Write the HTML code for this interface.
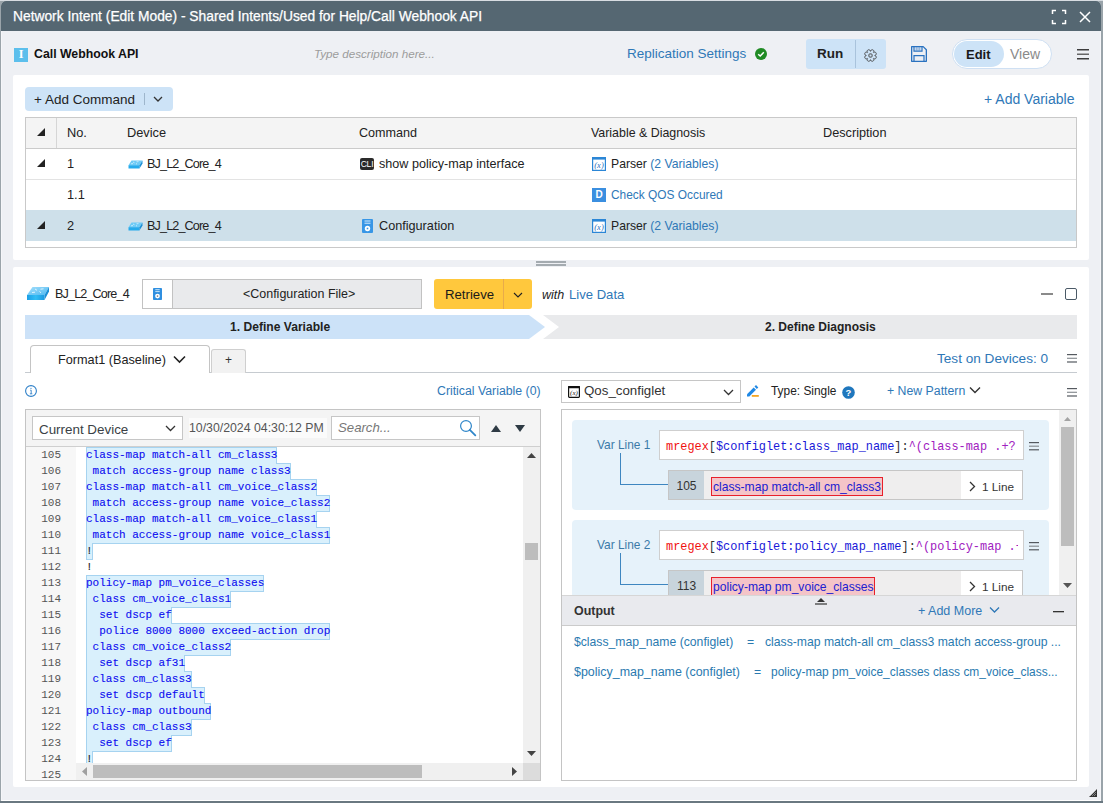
<!DOCTYPE html>
<html><head><meta charset="utf-8">
<style>
*{box-sizing:border-box;margin:0;padding:0}
html,body{width:1103px;height:803px;overflow:hidden}
body{position:relative;background:#9aa4aa;font-family:"Liberation Sans",sans-serif;font-size:12.5px;color:#222}
.a{position:absolute}
.t{position:absolute;white-space:pre;line-height:16px}
.win{position:absolute;left:1px;top:1px;width:1100px;height:800px;background:#eef0f4;border-radius:5px 5px 0 0;overflow:hidden;border-left:1px solid #f5f6f9;border-right:1px solid #f5f6f9;border-bottom:1px solid #fff}
.title{position:absolute;left:0;top:0;width:1100px;height:30px;background:#556772}
.card{position:absolute;background:#fff;border-radius:2px}
.blue{color:#2f78b7}
.ham{position:absolute;width:12px;height:10px;border-top:2px solid #555;border-bottom:2px solid #555}
.ham:after{content:"";position:absolute;left:0;top:2px;width:12px;height:2px;background:#555}
.mono{font-family:"Liberation Mono",monospace}
</style></head><body>
<div class="a" style="left:0;top:0;width:1103px;height:1px;background:#d8dde2"></div><div class="a" style="left:0;top:801px;width:1103px;height:2px;background:#6a7881"></div>
<div class="win"></div>
<div class="title" style="left:1px;top:1px;border-radius:5px 5px 0 0"></div>

<!-- title text -->
<div class="t" style="left:13px;top:9px;color:#fff;font-size:13.8px;-webkit-text-stroke:0.25px #fff">Network Intent (Edit Mode) - Shared Intents/Used for Help/Call Webhook API</div>
<!-- maximize -->
<svg class="a" style="left:1051px;top:9px" width="16" height="16" viewBox="0 0 16 16"><path d="M1.5 5V1.5H5M11 1.5H14.5V5M14.5 11V14.5H11M5 14.5H1.5V11" fill="none" stroke="#fff" stroke-width="1.5"/></svg>
<!-- close -->
<svg class="a" style="left:1078px;top:10px" width="14" height="14" viewBox="0 0 14 14"><path d="M2 2L12 12M12 2L2 12" fill="none" stroke="#fff" stroke-width="1.5"/></svg>

<!-- row 2 -->
<div class="a" style="left:14px;top:48px;width:14px;height:14px;background:#5cbfec"></div>
<div class="t" style="left:14px;top:46px;width:14px;text-align:center;color:#fff;font-family:'Liberation Serif';font-weight:bold;font-size:12px">I</div>
<div class="t" style="left:34px;top:46px;font-weight:bold;font-size:12.3px;color:#111">Call Webhook API</div>
<div class="t" style="left:314px;top:46px;font-style:italic;color:#9c9c9c;font-size:11.65px">Type description here...</div>
<div class="t blue" style="left:627px;top:46px;font-size:13.5px">Replication Settings</div>
<svg class="a" style="left:755px;top:48px" width="12" height="12" viewBox="0 0 12 12"><circle cx="6" cy="6" r="6" fill="#1f8b24"/><path d="M3.2 6.2L5.2 8L8.8 4.3" fill="none" stroke="#fff" stroke-width="1.5"/></svg>
<!-- run -->
<div class="a" style="left:806px;top:39px;width:80px;height:30px;background:#cde3f7;border-radius:3px"></div>
<div class="a" style="left:855px;top:40px;width:1px;height:28px;background:#a9c3dc"></div>
<div class="t" style="left:817px;top:46px;font-weight:bold;font-size:13.5px;color:#222">Run</div>
<svg class="a" style="left:863.5px;top:48.5px" width="13" height="13" viewBox="0 0 13 13"><path d="M10.80 6.50 L10.80 6.58 L10.80 6.65 L11.04 6.74 L11.37 6.84 L11.57 6.94 L11.72 7.05 L11.84 7.16 L11.94 7.26 L12.02 7.37 L12.09 7.49 L12.15 7.60 L12.20 7.71 L12.24 7.82 L12.27 7.94 L12.29 8.05 L12.30 8.16 L12.30 8.27 L12.29 8.38 L12.28 8.49 L12.26 8.60 L12.24 8.70 L12.20 8.80 L12.16 8.90 L12.11 9.00 L12.06 9.09 L12.00 9.18 L11.93 9.27 L11.85 9.35 L11.77 9.42 L11.69 9.49 L11.59 9.56 L11.49 9.62 L11.39 9.67 L11.27 9.72 L11.15 9.76 L11.02 9.79 L10.89 9.80 L10.74 9.81 L10.58 9.80 L10.40 9.77 L10.19 9.70 L9.88 9.54 L9.64 9.43 L9.59 9.49 L9.54 9.54 L9.49 9.59 L9.43 9.64 L9.54 9.88 L9.70 10.19 L9.77 10.40 L9.80 10.58 L9.81 10.74 L9.80 10.89 L9.79 11.02 L9.76 11.15 L9.72 11.27 L9.67 11.39 L9.62 11.49 L9.56 11.59 L9.49 11.69 L9.42 11.77 L9.35 11.85 L9.27 11.93 L9.18 12.00 L9.09 12.06 L9.00 12.11 L8.90 12.16 L8.80 12.20 L8.70 12.24 L8.60 12.26 L8.49 12.28 L8.38 12.29 L8.27 12.30 L8.16 12.30 L8.05 12.29 L7.94 12.27 L7.82 12.24 L7.71 12.20 L7.60 12.15 L7.49 12.09 L7.37 12.02 L7.26 11.94 L7.16 11.84 L7.05 11.72 L6.94 11.57 L6.84 11.37 L6.74 11.04 L6.65 10.80 L6.58 10.80 L6.50 10.80 L6.42 10.80 L6.35 10.80 L6.26 11.04 L6.16 11.37 L6.06 11.57 L5.95 11.72 L5.84 11.84 L5.74 11.94 L5.63 12.02 L5.51 12.09 L5.40 12.15 L5.29 12.20 L5.18 12.24 L5.06 12.27 L4.95 12.29 L4.84 12.30 L4.73 12.30 L4.62 12.29 L4.51 12.28 L4.40 12.26 L4.30 12.24 L4.20 12.20 L4.10 12.16 L4.00 12.11 L3.91 12.06 L3.82 12.00 L3.73 11.93 L3.65 11.85 L3.58 11.77 L3.51 11.69 L3.44 11.59 L3.38 11.49 L3.33 11.39 L3.28 11.27 L3.24 11.15 L3.21 11.02 L3.20 10.89 L3.19 10.74 L3.20 10.58 L3.23 10.40 L3.30 10.19 L3.46 9.88 L3.57 9.64 L3.51 9.59 L3.46 9.54 L3.41 9.49 L3.36 9.43 L3.12 9.54 L2.81 9.70 L2.60 9.77 L2.42 9.80 L2.26 9.81 L2.11 9.80 L1.98 9.79 L1.85 9.76 L1.73 9.72 L1.61 9.67 L1.51 9.62 L1.41 9.56 L1.31 9.49 L1.23 9.42 L1.15 9.35 L1.07 9.27 L1.00 9.18 L0.94 9.09 L0.89 9.00 L0.84 8.90 L0.80 8.80 L0.76 8.70 L0.74 8.60 L0.72 8.49 L0.71 8.38 L0.70 8.27 L0.70 8.16 L0.71 8.05 L0.73 7.94 L0.76 7.82 L0.80 7.71 L0.85 7.60 L0.91 7.49 L0.98 7.37 L1.06 7.26 L1.16 7.16 L1.28 7.05 L1.43 6.94 L1.63 6.84 L1.96 6.74 L2.20 6.65 L2.20 6.58 L2.20 6.50 L2.20 6.42 L2.20 6.35 L1.96 6.26 L1.63 6.16 L1.43 6.06 L1.28 5.95 L1.16 5.84 L1.06 5.74 L0.98 5.63 L0.91 5.51 L0.85 5.40 L0.80 5.29 L0.76 5.18 L0.73 5.06 L0.71 4.95 L0.70 4.84 L0.70 4.73 L0.71 4.62 L0.72 4.51 L0.74 4.40 L0.76 4.30 L0.80 4.20 L0.84 4.10 L0.89 4.00 L0.94 3.91 L1.00 3.82 L1.07 3.73 L1.15 3.65 L1.23 3.58 L1.31 3.51 L1.41 3.44 L1.51 3.38 L1.61 3.33 L1.73 3.28 L1.85 3.24 L1.98 3.21 L2.11 3.20 L2.26 3.19 L2.42 3.20 L2.60 3.23 L2.81 3.30 L3.12 3.46 L3.36 3.57 L3.41 3.51 L3.46 3.46 L3.51 3.41 L3.57 3.36 L3.46 3.12 L3.30 2.81 L3.23 2.60 L3.20 2.42 L3.19 2.26 L3.20 2.11 L3.21 1.98 L3.24 1.85 L3.28 1.73 L3.33 1.61 L3.38 1.51 L3.44 1.41 L3.51 1.31 L3.58 1.23 L3.65 1.15 L3.73 1.07 L3.82 1.00 L3.91 0.94 L4.00 0.89 L4.10 0.84 L4.20 0.80 L4.30 0.76 L4.40 0.74 L4.51 0.72 L4.62 0.71 L4.73 0.70 L4.84 0.70 L4.95 0.71 L5.06 0.73 L5.18 0.76 L5.29 0.80 L5.40 0.85 L5.51 0.91 L5.63 0.98 L5.74 1.06 L5.84 1.16 L5.95 1.28 L6.06 1.43 L6.16 1.63 L6.26 1.96 L6.35 2.20 L6.42 2.20 L6.50 2.20 L6.58 2.20 L6.65 2.20 L6.74 1.96 L6.84 1.63 L6.94 1.43 L7.05 1.28 L7.16 1.16 L7.26 1.06 L7.37 0.98 L7.49 0.91 L7.60 0.85 L7.71 0.80 L7.82 0.76 L7.94 0.73 L8.05 0.71 L8.16 0.70 L8.27 0.70 L8.38 0.71 L8.49 0.72 L8.60 0.74 L8.70 0.76 L8.80 0.80 L8.90 0.84 L9.00 0.89 L9.09 0.94 L9.18 1.00 L9.27 1.07 L9.35 1.15 L9.42 1.23 L9.49 1.31 L9.56 1.41 L9.62 1.51 L9.67 1.61 L9.72 1.73 L9.76 1.85 L9.79 1.98 L9.80 2.11 L9.81 2.26 L9.80 2.42 L9.77 2.60 L9.70 2.81 L9.54 3.12 L9.43 3.36 L9.49 3.41 L9.54 3.46 L9.59 3.51 L9.64 3.57 L9.88 3.46 L10.19 3.30 L10.40 3.23 L10.58 3.20 L10.74 3.19 L10.89 3.20 L11.02 3.21 L11.15 3.24 L11.27 3.28 L11.39 3.33 L11.49 3.38 L11.59 3.44 L11.69 3.51 L11.77 3.58 L11.85 3.65 L11.93 3.73 L12.00 3.82 L12.06 3.91 L12.11 4.00 L12.16 4.10 L12.20 4.20 L12.24 4.30 L12.26 4.40 L12.28 4.51 L12.29 4.62 L12.30 4.73 L12.30 4.84 L12.29 4.95 L12.27 5.06 L12.24 5.18 L12.20 5.29 L12.15 5.40 L12.09 5.51 L12.02 5.63 L11.94 5.74 L11.84 5.84 L11.72 5.95 L11.57 6.06 L11.37 6.16 L11.04 6.26 L10.80 6.35 L10.80 6.42Z" fill="none" stroke="#444" stroke-width="0.95"/><rect x="4.9" y="4.9" width="3.2" height="3.2" rx="0.9" fill="none" stroke="#444" stroke-width="0.95"/></svg>
<!-- save -->
<svg class="a" style="left:910px;top:45px" width="18" height="18" viewBox="0 0 18 18"><path d="M1.65 1.65H13.2L16.35 4.8V16.35H1.65Z" fill="none" stroke="#2a72c0" stroke-width="1.3" stroke-linejoin="round"/><path d="M4 1.65V6.2H12V1.65" fill="none" stroke="#2a72c0" stroke-width="1.2"/><path d="M6.2 2V5.8M8 2V5.8M9.8 2V5.8" stroke="#5d95d2" stroke-width="0.9"/><path d="M4 16.35V10.6H14V16.35" fill="none" stroke="#2a72c0" stroke-width="1.2"/></svg>
<!-- edit/view -->
<div class="a" style="left:952px;top:39px;width:100px;height:30px;background:#fff;border:1px solid #cfe0f3;border-radius:15px"></div>
<div class="a" style="left:954px;top:41px;width:50px;height:26px;background:#cde3f7;border-radius:13px"></div>
<div class="t" style="left:966px;top:47px;font-size:13px;font-weight:bold;color:#1a1a1a">Edit</div>
<div class="t" style="left:1010px;top:46px;font-size:14px;color:#8a8a8a">View</div>
<svg class="a" style="left:1077px;top:49px" width="12" height="11.5" viewBox="0 0 12 11.5"><rect x="0" y="0" width="12" height="1.5" fill="#3d3d3d"/><rect x="0" y="4.5" width="12" height="1.5" fill="#666"/><rect x="0" y="9.0" width="12" height="1.5" fill="#3d3d3d"/></svg>

<!-- top card -->
<div class="card" style="left:13px;top:75px;width:1076px;height:185px"></div>
<div class="a" style="left:25px;top:87px;width:148px;height:24px;background:#cde3f7;border-radius:4px"></div>
<div class="t" style="left:34px;top:92px;font-size:13.5px;color:#222">+ Add Command</div>
<div class="a" style="left:144px;top:93px;width:1px;height:12px;background:#9eb6cc"></div>
<svg class="a" style="left:153px;top:96px" width="10" height="7" viewBox="0 0 10 7"><path d="M1 1L5 5L9 1" fill="none" stroke="#333" stroke-width="1.3"/></svg>
<div class="t blue" style="left:984px;top:91px;font-size:14px">+ Add Variable</div>

<!-- table -->
<div class="a" style="left:25px;top:117px;width:1052px;height:131px;border:1px solid #c9c9c9;background:#fff"></div>
<div class="a" style="left:26px;top:118px;width:1050px;height:31px;background:#f4f4f4;border-bottom:1px solid #cbcbcb"></div>
<div class="a" style="left:56px;top:118px;width:1px;height:30px;background:#d6d6d6"></div>
<div class="a" style="left:26px;top:179px;width:1050px;height:1px;background:#e3e3e3"></div>
<div class="a" style="left:26px;top:210px;width:1050px;height:31px;background:#cee0ea"></div>

<!-- table text -->
<svg class="a" style="left:37px;top:128px" width="8" height="8" viewBox="0 0 8 8"><path d="M8 0V8H0Z" fill="#222"/></svg>
<div class="t" style="left:67px;top:125px;font-size:12.8px">No.</div>
<div class="t" style="left:127px;top:125px;font-size:12.8px">Device</div>
<div class="t" style="left:359px;top:125px;font-size:12.6px">Command</div>
<div class="t" style="left:591px;top:125px;font-size:12.4px">Variable &amp; Diagnosis</div>
<div class="t" style="left:823px;top:125px;font-size:12.7px">Description</div>

<svg class="a" style="left:37px;top:159px" width="8" height="8" viewBox="0 0 8 8"><path d="M8 0V8H0Z" fill="#222"/></svg>
<div class="t" style="left:67px;top:156px;font-size:12.8px">1</div>
<svg class="a" style="left:127.5px;top:159.5px" width="15" height="9" viewBox="0 0 15 9"><path d="M3.5 0.5H14.5L11.5 5.2H0.5Z" fill="#6ccaf6"/><path d="M0.5 5.2H11.5V8.5H0.5Z" fill="#25abec"/><path d="M11.5 5.2L14.5 0.5V3.5L11.5 8.5Z" fill="#1a8fd6"/><path d="M5 2L6.5 2.8M8.5 1.8L10.5 1.6M3 3.8L5 3.6M8 3.4L9 4.2" stroke="#e6f6fe" stroke-width="0.7"/></svg>
<div class="t" style="left:147px;top:156px;font-size:12.6px;letter-spacing:-0.85px">BJ_L2_Core_4</div>
<div class="a" style="left:360px;top:158px;width:14px;height:12px;background:#2b2b2b;border-radius:2px"></div>
<div class="t" style="left:360px;top:155.5px;width:14px;text-align:center;color:#fff;font-size:8.5px;letter-spacing:-0.2px">CLI</div>
<div class="t" style="left:379px;top:156px;font-size:12.6px">show policy-map interface</div>
<svg class="a" style="left:592px;top:157px" width="14" height="14" viewBox="0 0 14 14"><rect x="0.6" y="0.6" width="12.8" height="12.8" fill="#fff" stroke="#2b86d6" stroke-width="1.2"/><rect x="0" y="0" width="14" height="2.6" fill="#2b86d6"/><text x="7" y="10.8" text-anchor="middle" font-family="Liberation Serif" font-style="italic" font-size="8.5" fill="#1f6fc0">(x)</text></svg>
<div class="t" style="left:611px;top:156px;font-size:12.2px">Parser <span class="blue">(2 Variables)</span></div>

<div class="t" style="left:67px;top:187px;font-size:12.8px">1.1</div>
<div class="a" style="left:592px;top:188px;width:14px;height:14px;background:#3b8fe0"></div>
<div class="t" style="left:592px;top:187px;width:14px;text-align:center;color:#fff;font-size:10px;font-weight:bold">D</div>
<div class="t blue" style="left:611px;top:187px;font-size:11.9px">Check QOS Occured</div>

<svg class="a" style="left:37px;top:221px" width="8" height="8" viewBox="0 0 8 8"><path d="M8 0V8H0Z" fill="#222"/></svg>
<div class="t" style="left:67px;top:218px;font-size:12.8px">2</div>
<svg class="a" style="left:127.5px;top:221.5px" width="15" height="9" viewBox="0 0 15 9"><path d="M3.5 0.5H14.5L11.5 5.2H0.5Z" fill="#6ccaf6"/><path d="M0.5 5.2H11.5V8.5H0.5Z" fill="#25abec"/><path d="M11.5 5.2L14.5 0.5V3.5L11.5 8.5Z" fill="#1a8fd6"/><path d="M5 2L6.5 2.8M8.5 1.8L10.5 1.6M3 3.8L5 3.6M8 3.4L9 4.2" stroke="#e6f6fe" stroke-width="0.7"/></svg>
<div class="t" style="left:147px;top:218px;font-size:12.6px;letter-spacing:-0.85px">BJ_L2_Core_4</div>
<svg class="a" style="left:362px;top:219px" width="11" height="14" viewBox="0 0 11 14"><rect width="11" height="14" rx="1" fill="#3796e6"/><path d="M2.5 2H8.5M2.5 4.2H8.5" stroke="#d8ecfb" stroke-width="1"/><circle cx="5.5" cy="9.5" r="2.7" fill="#fff"/><rect x="4.7" y="8.7" width="1.6" height="1.6" fill="#3796e6"/></svg>
<div class="t" style="left:379px;top:218px;font-size:12.66px">Configuration</div>
<svg class="a" style="left:592px;top:219px" width="14" height="14" viewBox="0 0 14 14"><rect x="0.6" y="0.6" width="12.8" height="12.8" fill="#fff" stroke="#2b86d6" stroke-width="1.2"/><rect x="0" y="0" width="14" height="2.6" fill="#2b86d6"/><text x="7" y="10.8" text-anchor="middle" font-family="Liberation Serif" font-style="italic" font-size="8.5" fill="#1f6fc0">(x)</text></svg>
<div class="t" style="left:611px;top:218px;font-size:12.2px">Parser <span class="blue">(2 Variables)</span></div>

<!-- splitter -->
<div class="a" style="left:536px;top:261px;width:30px;height:2px;background:#a4abb0"></div>
<div class="a" style="left:536px;top:264px;width:30px;height:2px;background:#a4abb0"></div>

<!-- bottom card -->
<div class="card" style="left:13px;top:267px;width:1076px;height:520px"></div>

<!-- bottom header -->
<svg class="a" style="left:26px;top:286px" width="24" height="15" viewBox="0 0 24 15"><defs><linearGradient id="gt" x1="0" y1="0" x2="1" y2="1"><stop offset="0" stop-color="#a4defb"/><stop offset="1" stop-color="#4bb9f2"/></linearGradient><linearGradient id="gf" x1="0" y1="0" x2="1" y2="0"><stop offset="0" stop-color="#1b9fe6"/><stop offset="0.5" stop-color="#31bdf5"/><stop offset="1" stop-color="#1a98e0"/></linearGradient></defs><path d="M6.5 1H23L18.5 9H1Z" fill="url(#gt)"/><path d="M1 9H18.5V14H1Z" fill="url(#gf)"/><path d="M18.5 9L23 1V5.5L18.5 14Z" fill="#1a8fd6"/><path d="M9 3L11 4.3M14.5 3.2L17.5 2.8M6 6.5L9 6.2M13.5 5.5L15 6.8" stroke="#e6f6fe" stroke-width="0.9"/></svg>
<div class="t" style="left:55px;top:286px;font-size:12.6px;letter-spacing:-0.85px">BJ_L2_Core_4</div>
<div class="a" style="left:142px;top:279px;width:280px;height:30px;background:#e9eaec;border:1px solid #c2c2c2"></div>
<div class="a" style="left:143px;top:280px;width:30px;height:28px;background:#fff;border-right:1px solid #c2c2c2"></div>
<svg class="a" style="left:152.5px;top:288px" width="9" height="12" viewBox="0 0 9 12"><rect width="9" height="12" rx="0.8" fill="#2f8fe0"/><path d="M2.3 1.7H6.7M2.3 3.6H6.7" stroke="#d8ecfb" stroke-width="0.9"/><circle cx="4.5" cy="8.1" r="2.4" fill="#fff"/><rect x="3.8" y="7.4" width="1.4" height="1.4" fill="#777"/></svg>
<div class="t" style="left:243px;top:286px;font-size:12.47px;color:#222">&lt;Configuration File&gt;</div>
<div class="a" style="left:434px;top:279px;width:98px;height:30px;background:#ffc83d;border-radius:3px"></div>
<div class="a" style="left:503px;top:279px;width:1px;height:30px;background:#e8ab4a"></div>
<div class="t" style="left:445px;top:287px;font-size:13.2px;color:#1a1a1a">Retrieve</div>
<svg class="a" style="left:512.5px;top:292px" width="10" height="7" viewBox="0 0 10 7"><path d="M1 1L5 5L9 1" fill="none" stroke="#222" stroke-width="1.1"/></svg>
<div class="t" style="left:542px;top:287px;font-size:12.5px;font-style:italic;color:#222">with</div>
<div class="t blue" style="left:569px;top:287px;font-size:13.1px">Live Data</div>
<div class="a" style="left:1041px;top:293px;width:12px;height:2px;background:#8a8a8a"></div>
<div class="a" style="left:1065px;top:288px;width:12px;height:12px;border:1.5px solid #4b5a67;border-radius:2px"></div>

<!-- steps -->
<svg class="a" style="left:25px;top:315px" width="1052" height="24" viewBox="0 0 1052 24"><path d="M0 0H504L520 12L504 24H0Z" fill="#cce2f8"/><path d="M518 0H1052V24H518L534 12Z" fill="#e9eaec"/></svg>
<div class="t" style="left:230px;top:319px;font-size:12.1px;font-weight:bold;color:#222">1. Define Variable</div>
<div class="t" style="left:765px;top:319px;font-size:12px;font-weight:bold;color:#222">2. Define Diagnosis</div>

<!-- tabs -->
<div class="a" style="left:25px;top:372px;width:1052px;height:1px;background:#c6cbd0"></div>
<div class="a" style="left:30px;top:345px;width:180px;height:28px;background:#fff;border:1px solid #c4c4c4;border-bottom:none;border-radius:4px 4px 0 0"></div>
<div class="t" style="left:58px;top:352px;font-size:12.7px;color:#222">Format1 (Baseline)</div>
<svg class="a" style="left:173px;top:355px" width="13" height="9" viewBox="0 0 13 9"><path d="M1 1.5L6.5 7L12 1.5" fill="none" stroke="#222" stroke-width="1.6"/></svg>
<div class="a" style="left:211px;top:349px;width:35px;height:24px;background:#f2f2f2;border:1px solid #cfcfcf;border-bottom:none;border-radius:3px 3px 0 0"></div>
<div class="t" style="left:211px;top:352px;width:35px;text-align:center;font-size:12px;color:#333">+</div>
<div class="t blue" style="left:937px;top:351px;font-size:13.6px">Test on Devices: 0</div>
<svg class="a" style="left:1067px;top:353.7px" width="10" height="9.6" viewBox="0 0 10 9.6"><rect x="0" y="0" width="10" height="1.2" fill="#555a60"/><rect x="0" y="3.7" width="10" height="1.2" fill="#8a8f94"/><rect x="0" y="7.4" width="10" height="1.2" fill="#555a60"/></svg>

<!-- info / critical -->
<svg class="a" style="left:25px;top:385px" width="12" height="12" viewBox="0 0 12 12"><circle cx="6" cy="6" r="5.4" fill="none" stroke="#2f80c8" stroke-width="1.1"/><path d="M5.4 3.4H6.6" stroke="#2f80c8" stroke-width="0.9"/><path d="M5.2 5.2H6.2V8.7M4.9 8.8H7.3" fill="none" stroke="#2f80c8" stroke-width="0.9"/></svg>
<div class="t blue" style="left:437px;top:383px;font-size:12.3px">Critical Variable (0)</div>

<!-- editor -->
<div class="a" style="left:25px;top:409px;width:516px;height:372px;border:1px solid #c4c4c4;background:#fff"></div>
<div class="a" style="left:26px;top:410px;width:514px;height:37px;background:#f4f4f4;border-bottom:1px solid #cfcfcf"></div>
<div class="a" style="left:32px;top:416px;width:151px;height:24px;background:#fff;border:1px solid #c6c6c6"></div>
<div class="t" style="left:39px;top:422px;font-size:13.4px;color:#3a3f45">Current Device</div>
<svg class="a" style="left:165px;top:425px" width="11" height="7" viewBox="0 0 11 7"><path d="M1 1L5.5 5.5L10 1" fill="none" stroke="#333" stroke-width="1.3"/></svg>
<div class="a" style="left:189px;top:418px;width:138px;height:20px;background:#fbfbfb"></div>
<div class="t" style="left:189px;top:420px;font-size:12.3px;color:#555">10/30/2024 04:30:12 PM</div>
<div class="a" style="left:331px;top:416px;width:149px;height:24px;background:#fff;border:1px solid #c6c6c6"></div>
<div class="t" style="left:338px;top:420px;font-size:13.2px;font-style:italic;color:#777">Search...</div>
<svg class="a" style="left:459px;top:419px" width="19" height="18" viewBox="0 0 19 18"><circle cx="7" cy="7" r="5.4" fill="none" stroke="#2f86c9" stroke-width="1.2"/><path d="M10.8 10.8L16.3 16.3" stroke="#2f86c9" stroke-width="1.8" stroke-linecap="round"/></svg>
<svg class="a" style="left:491px;top:425px" width="10" height="7" viewBox="0 0 10 7"><path d="M0 7L5 0L10 7Z" fill="#2e3a44"/></svg>
<svg class="a" style="left:515px;top:425px" width="10" height="7" viewBox="0 0 10 7"><path d="M0 0L5 7L10 0Z" fill="#2e3a44"/></svg>

<!-- code -->
<div class="a" style="left:26px;top:447px;width:50px;height:333px;background:#f7f7f7"></div>
<div class="a" style="left:86px;top:447px;width:190px;height:16px;background:#d9f0fc"></div>
<div class="a" style="left:86px;top:463px;width:204px;height:16px;background:#d9f0fc"></div>
<div class="a" style="left:86px;top:479px;width:230px;height:16px;background:#d9f0fc"></div>
<div class="a" style="left:86px;top:495px;width:243px;height:16px;background:#d9f0fc"></div>
<div class="a" style="left:86px;top:511px;width:230px;height:16px;background:#d9f0fc"></div>
<div class="a" style="left:86px;top:527px;width:243px;height:16px;background:#d9f0fc"></div>
<div class="a" style="left:86px;top:543px;width:6px;height:16px;background:#d9f0fc"></div>
<div class="a" style="left:86px;top:447px;width:1px;height:112px;background:#a6d3f0"></div>
<div class="a" style="left:276px;top:447px;width:1px;height:17px;background:#a6d3f0"></div>
<div class="a" style="left:86px;top:447px;width:191px;height:1px;background:#a6d3f0"></div>
<div class="a" style="left:290px;top:463px;width:1px;height:17px;background:#a6d3f0"></div>
<div class="a" style="left:276px;top:463px;width:15px;height:1px;background:#a6d3f0"></div>
<div class="a" style="left:316px;top:479px;width:1px;height:17px;background:#a6d3f0"></div>
<div class="a" style="left:290px;top:479px;width:27px;height:1px;background:#a6d3f0"></div>
<div class="a" style="left:329px;top:495px;width:1px;height:17px;background:#a6d3f0"></div>
<div class="a" style="left:316px;top:495px;width:14px;height:1px;background:#a6d3f0"></div>
<div class="a" style="left:316px;top:511px;width:1px;height:17px;background:#a6d3f0"></div>
<div class="a" style="left:316px;top:511px;width:14px;height:1px;background:#a6d3f0"></div>
<div class="a" style="left:329px;top:527px;width:1px;height:17px;background:#a6d3f0"></div>
<div class="a" style="left:316px;top:527px;width:14px;height:1px;background:#a6d3f0"></div>
<div class="a" style="left:92px;top:543px;width:1px;height:17px;background:#a6d3f0"></div>
<div class="a" style="left:92px;top:543px;width:238px;height:1px;background:#a6d3f0"></div>
<div class="a" style="left:86px;top:559px;width:7px;height:1px;background:#a6d3f0"></div>
<div class="a" style="left:86px;top:575px;width:177px;height:16px;background:#d9f0fc"></div>
<div class="a" style="left:86px;top:591px;width:144px;height:16px;background:#d9f0fc"></div>
<div class="a" style="left:86px;top:607px;width:85px;height:16px;background:#d9f0fc"></div>
<div class="a" style="left:86px;top:623px;width:243px;height:16px;background:#d9f0fc"></div>
<div class="a" style="left:86px;top:639px;width:144px;height:16px;background:#d9f0fc"></div>
<div class="a" style="left:86px;top:655px;width:98px;height:16px;background:#d9f0fc"></div>
<div class="a" style="left:86px;top:671px;width:105px;height:16px;background:#d9f0fc"></div>
<div class="a" style="left:86px;top:687px;width:118px;height:16px;background:#d9f0fc"></div>
<div class="a" style="left:86px;top:703px;width:124px;height:16px;background:#d9f0fc"></div>
<div class="a" style="left:86px;top:719px;width:105px;height:16px;background:#d9f0fc"></div>
<div class="a" style="left:86px;top:735px;width:85px;height:16px;background:#d9f0fc"></div>
<div class="a" style="left:86px;top:751px;width:6px;height:16px;background:#d9f0fc"></div>
<div class="a" style="left:86px;top:575px;width:1px;height:192px;background:#a6d3f0"></div>
<div class="a" style="left:263px;top:575px;width:1px;height:17px;background:#a6d3f0"></div>
<div class="a" style="left:86px;top:575px;width:178px;height:1px;background:#a6d3f0"></div>
<div class="a" style="left:230px;top:591px;width:1px;height:17px;background:#a6d3f0"></div>
<div class="a" style="left:230px;top:591px;width:34px;height:1px;background:#a6d3f0"></div>
<div class="a" style="left:171px;top:607px;width:1px;height:17px;background:#a6d3f0"></div>
<div class="a" style="left:171px;top:607px;width:60px;height:1px;background:#a6d3f0"></div>
<div class="a" style="left:329px;top:623px;width:1px;height:17px;background:#a6d3f0"></div>
<div class="a" style="left:171px;top:623px;width:159px;height:1px;background:#a6d3f0"></div>
<div class="a" style="left:230px;top:639px;width:1px;height:17px;background:#a6d3f0"></div>
<div class="a" style="left:230px;top:639px;width:100px;height:1px;background:#a6d3f0"></div>
<div class="a" style="left:184px;top:655px;width:1px;height:17px;background:#a6d3f0"></div>
<div class="a" style="left:184px;top:655px;width:47px;height:1px;background:#a6d3f0"></div>
<div class="a" style="left:191px;top:671px;width:1px;height:17px;background:#a6d3f0"></div>
<div class="a" style="left:184px;top:671px;width:8px;height:1px;background:#a6d3f0"></div>
<div class="a" style="left:204px;top:687px;width:1px;height:17px;background:#a6d3f0"></div>
<div class="a" style="left:191px;top:687px;width:14px;height:1px;background:#a6d3f0"></div>
<div class="a" style="left:210px;top:703px;width:1px;height:17px;background:#a6d3f0"></div>
<div class="a" style="left:204px;top:703px;width:7px;height:1px;background:#a6d3f0"></div>
<div class="a" style="left:191px;top:719px;width:1px;height:17px;background:#a6d3f0"></div>
<div class="a" style="left:191px;top:719px;width:20px;height:1px;background:#a6d3f0"></div>
<div class="a" style="left:171px;top:735px;width:1px;height:17px;background:#a6d3f0"></div>
<div class="a" style="left:171px;top:735px;width:21px;height:1px;background:#a6d3f0"></div>
<div class="a" style="left:92px;top:751px;width:1px;height:17px;background:#a6d3f0"></div>
<div class="a" style="left:92px;top:751px;width:80px;height:1px;background:#a6d3f0"></div>
<div class="a" style="left:86px;top:767px;width:7px;height:1px;background:#a6d3f0"></div>
<div class="t mono" style="left:41px;top:447px;width:20px;text-align:right;font-size:11px;color:#555">105</div>
<div class="t mono" style="left:86px;top:447px;font-size:11px;color:#0c0cf0;-webkit-text-stroke:0.1px">class-map match-all cm_class3</div>
<div class="t mono" style="left:41px;top:463px;width:20px;text-align:right;font-size:11px;color:#555">106</div>
<div class="t mono" style="left:86px;top:463px;font-size:11px;color:#0c0cf0;-webkit-text-stroke:0.1px"> match access-group name class3</div>
<div class="t mono" style="left:41px;top:479px;width:20px;text-align:right;font-size:11px;color:#555">107</div>
<div class="t mono" style="left:86px;top:479px;font-size:11px;color:#0c0cf0;-webkit-text-stroke:0.1px">class-map match-all cm_voice_class2</div>
<div class="t mono" style="left:41px;top:495px;width:20px;text-align:right;font-size:11px;color:#555">108</div>
<div class="t mono" style="left:86px;top:495px;font-size:11px;color:#0c0cf0;-webkit-text-stroke:0.1px"> match access-group name voice_class2</div>
<div class="t mono" style="left:41px;top:511px;width:20px;text-align:right;font-size:11px;color:#555">109</div>
<div class="t mono" style="left:86px;top:511px;font-size:11px;color:#0c0cf0;-webkit-text-stroke:0.1px">class-map match-all cm_voice_class1</div>
<div class="t mono" style="left:41px;top:527px;width:20px;text-align:right;font-size:11px;color:#555">110</div>
<div class="t mono" style="left:86px;top:527px;font-size:11px;color:#0c0cf0;-webkit-text-stroke:0.1px"> match access-group name voice_class1</div>
<div class="t mono" style="left:41px;top:543px;width:20px;text-align:right;font-size:11px;color:#555">111</div>
<div class="t mono" style="left:86px;top:543px;font-size:11px;color:#1a1a1a;-webkit-text-stroke:0.1px">!</div>
<div class="t mono" style="left:41px;top:559px;width:20px;text-align:right;font-size:11px;color:#555">112</div>
<div class="t mono" style="left:86px;top:559px;font-size:11px;color:#1a1a1a;-webkit-text-stroke:0.1px">!</div>
<div class="t mono" style="left:41px;top:575px;width:20px;text-align:right;font-size:11px;color:#555">113</div>
<div class="t mono" style="left:86px;top:575px;font-size:11px;color:#0c0cf0;-webkit-text-stroke:0.1px">policy-map pm_voice_classes</div>
<div class="t mono" style="left:41px;top:591px;width:20px;text-align:right;font-size:11px;color:#555">114</div>
<div class="t mono" style="left:86px;top:591px;font-size:11px;color:#0c0cf0;-webkit-text-stroke:0.1px"> class cm_voice_class1</div>
<div class="t mono" style="left:41px;top:607px;width:20px;text-align:right;font-size:11px;color:#555">115</div>
<div class="t mono" style="left:86px;top:607px;font-size:11px;color:#0c0cf0;-webkit-text-stroke:0.1px">  set dscp ef</div>
<div class="t mono" style="left:41px;top:623px;width:20px;text-align:right;font-size:11px;color:#555">116</div>
<div class="t mono" style="left:86px;top:623px;font-size:11px;color:#0c0cf0;-webkit-text-stroke:0.1px">  police 8000 8000 exceed-action drop</div>
<div class="t mono" style="left:41px;top:639px;width:20px;text-align:right;font-size:11px;color:#555">117</div>
<div class="t mono" style="left:86px;top:639px;font-size:11px;color:#0c0cf0;-webkit-text-stroke:0.1px"> class cm_voice_class2</div>
<div class="t mono" style="left:41px;top:655px;width:20px;text-align:right;font-size:11px;color:#555">118</div>
<div class="t mono" style="left:86px;top:655px;font-size:11px;color:#0c0cf0;-webkit-text-stroke:0.1px">  set dscp af31</div>
<div class="t mono" style="left:41px;top:671px;width:20px;text-align:right;font-size:11px;color:#555">119</div>
<div class="t mono" style="left:86px;top:671px;font-size:11px;color:#0c0cf0;-webkit-text-stroke:0.1px"> class cm_class3</div>
<div class="t mono" style="left:41px;top:687px;width:20px;text-align:right;font-size:11px;color:#555">120</div>
<div class="t mono" style="left:86px;top:687px;font-size:11px;color:#0c0cf0;-webkit-text-stroke:0.1px">  set dscp default</div>
<div class="t mono" style="left:41px;top:703px;width:20px;text-align:right;font-size:11px;color:#555">121</div>
<div class="t mono" style="left:86px;top:703px;font-size:11px;color:#0c0cf0;-webkit-text-stroke:0.1px">policy-map outbound</div>
<div class="t mono" style="left:41px;top:719px;width:20px;text-align:right;font-size:11px;color:#555">122</div>
<div class="t mono" style="left:86px;top:719px;font-size:11px;color:#0c0cf0;-webkit-text-stroke:0.1px"> class cm_class3</div>
<div class="t mono" style="left:41px;top:735px;width:20px;text-align:right;font-size:11px;color:#555">123</div>
<div class="t mono" style="left:86px;top:735px;font-size:11px;color:#0c0cf0;-webkit-text-stroke:0.1px">  set dscp ef</div>
<div class="t mono" style="left:41px;top:751px;width:20px;text-align:right;font-size:11px;color:#555">124</div>
<div class="t mono" style="left:86px;top:751px;font-size:11px;color:#1a1a1a;-webkit-text-stroke:0.1px">!</div>
<div class="t mono" style="left:41px;top:767px;width:20px;text-align:right;font-size:11px;color:#555">125</div>
<div class="a" style="left:523px;top:447px;width:17px;height:316px;background:#f0f0f0"></div>
<svg class="a" style="left:527px;top:453px" width="9" height="5" viewBox="0 0 9 5"><path d="M0 5L4.5 0L9 5Z" fill="#444"/></svg>
<div class="a" style="left:525px;top:543px;width:13px;height:17px;background:#bdbdbd"></div>
<svg class="a" style="left:527px;top:751px" width="9" height="5" viewBox="0 0 9 5"><path d="M0 0L4.5 5L9 0Z" fill="#444"/></svg>
<div class="a" style="left:76px;top:763px;width:447px;height:17px;background:#f0f0f0"></div>
<svg class="a" style="left:82px;top:767px" width="5" height="9" viewBox="0 0 5 9"><path d="M5 0L0 4.5L5 9Z" fill="#a0a0a0"/></svg>
<div class="a" style="left:93px;top:765px;width:329px;height:13px;background:#bdbdbd"></div>
<svg class="a" style="left:512px;top:767px" width="5" height="9" viewBox="0 0 5 9"><path d="M0 0L5 4.5L0 9Z" fill="#444"/></svg>
<div class="a" style="left:523px;top:763px;width:17px;height:17px;background:#dcdcdc"></div>

<!-- right panel -->
<div class="a" style="left:561px;top:380px;width:180px;height:23px;background:#fff;border:1px solid #c6c6c6"></div>
<svg class="a" style="left:568px;top:386px" width="12" height="12" viewBox="0 0 12 12"><rect x="0.6" y="0.6" width="10.8" height="10.8" rx="0.8" fill="#fff" stroke="#111" stroke-width="1.2"/><rect x="0" y="0" width="12" height="2.3" rx="0.8" fill="#111"/><text x="6" y="9.3" text-anchor="middle" font-family="Liberation Serif" font-style="italic" font-size="7" fill="#222">(x)</text></svg>
<div class="t" style="left:584px;top:383px;font-size:13.3px;color:#333">Qos_configlet</div>
<svg class="a" style="left:723px;top:389px" width="11" height="7" viewBox="0 0 11 7"><path d="M1 1L5.5 5.5L10 1" fill="none" stroke="#333" stroke-width="1.3"/></svg>
<svg class="a" style="left:746px;top:384px" width="14" height="14" viewBox="0 0 14 14"><path d="M1 12.5V10.2L7.7 3.5L10 5.8L3.3 12.5Z" fill="#1e88e5"/><path d="M8.5 2.6L10 1.1L12.3 3.4L10.8 4.9Z" fill="#1e88e5"/><rect x="5.8" y="11" width="7" height="1.8" fill="#f5a623"/></svg>
<div class="t" style="left:771px;top:383px;font-size:11.9px;color:#222">Type: Single</div>
<svg class="a" style="left:842px;top:386px" width="13" height="13" viewBox="0 0 13 13"><circle cx="6.5" cy="6.5" r="6.3" fill="#1f77bd"/><text x="6.5" y="10.2" text-anchor="middle" font-family="Liberation Sans" font-weight="bold" font-size="9.5" fill="#fff">?</text></svg>
<div class="t blue" style="left:887px;top:383px;font-size:12.3px">+ New Pattern</div>
<svg class="a" style="left:969px;top:386px" width="12" height="8" viewBox="0 0 12 8"><path d="M1 1.5L6 6.5L11 1.5" fill="none" stroke="#333" stroke-width="1.4"/></svg>
<svg class="a" style="left:1067px;top:387.8px" width="10" height="9.6" viewBox="0 0 10 9.6"><rect x="0" y="0" width="10" height="1.2" fill="#555a60"/><rect x="0" y="3.7" width="10" height="1.2" fill="#8a8f94"/><rect x="0" y="7.4" width="10" height="1.2" fill="#555a60"/></svg>

<div class="a" style="left:561px;top:409px;width:516px;height:372px;border:1px solid #c4c4c4;background:#fff"></div>
<!-- v scrollbar -->
<div class="a" style="left:1059px;top:410px;width:17px;height:185px;background:#f0f0f0"></div>
<svg class="a" style="left:1064px;top:417px" width="7" height="4" viewBox="0 0 7 4"><path d="M0 4L3.5 0L7 4Z" fill="#a3a3a3"/></svg>
<div class="a" style="left:1061px;top:427px;width:13px;height:119px;background:#bdbdbd"></div>
<svg class="a" style="left:1063px;top:583px" width="9" height="5" viewBox="0 0 9 5"><path d="M0 0L4.5 5L9 0Z" fill="#555"/></svg>

<!-- var card 1 -->
<div class="a" style="left:572px;top:420px;width:477px;height:90px;background:#e6f2fa;border-radius:4px"></div>
<div class="t" style="left:597px;top:437px;font-size:11.9px;color:#3b7aa8">Var Line 1</div>
<div class="a" style="left:620px;top:453px;width:1px;height:32px;background:#3e86c0"></div>
<div class="a" style="left:620px;top:484px;width:48px;height:1px;background:#3e86c0"></div>
<div class="a" style="left:659px;top:430px;width:365px;height:30px;background:#fff;border:1px solid #cfcfcf"><div class="a" style="left:0;top:0;width:358px;height:28px;overflow:hidden">
  <div class="t mono" style="left:6px;top:8px;font-size:11.9px;color:#1818d8"><span style="color:#f01010">mregex</span><span style="color:#333">[</span>$configlet:class_map_name<span style="color:#333">]:</span><span style="color:#a020c0">^(class-map .+?</span></div>
</div></div>
<svg class="a" style="left:1029px;top:441.8px" width="10" height="9.4" viewBox="0 0 10 9.4"><rect x="0" y="0" width="10" height="1.2" fill="#555a60"/><rect x="0" y="3.6" width="10" height="1.2" fill="#8a8f94"/><rect x="0" y="7.2" width="10" height="1.2" fill="#555a60"/></svg>
<div class="a" style="left:668px;top:470px;width:355px;height:30px;background:#efeeee;border:1px solid #c6c6c6"></div>
<div class="a" style="left:669px;top:471px;width:35px;height:28px;background:#c8d4dc"></div>
<div class="t" style="left:669px;top:478px;width:35px;text-align:center;font-size:12px;color:#333">105</div>
<div class="a" style="left:711px;top:477px;width:172px;height:19px;background:#f4c4c8;border:1px solid #e8202a"></div>
<div class="t" style="left:713px;top:479px;font-size:12.1px;color:#2020d0">class-map match-all cm_class3</div>
<div class="a" style="left:961px;top:471px;width:61px;height:28px;background:#fff"></div>
<svg class="a" style="left:969px;top:481px" width="7" height="11" viewBox="0 0 7 11"><path d="M1 1L5.5 5.5L1 10" fill="none" stroke="#333" stroke-width="1.3"/></svg>
<div class="t" style="left:982px;top:479px;font-size:11.75px;color:#333">1 Line</div>

<!-- var card 2 -->
<div class="a" style="left:572px;top:520px;width:477px;height:75px;background:#e6f2fa;border-radius:4px 4px 0 0"></div>
<div class="t" style="left:597px;top:537px;font-size:11.9px;color:#3b7aa8">Var Line 2</div>
<div class="a" style="left:620px;top:553px;width:1px;height:32px;background:#3e86c0"></div>
<div class="a" style="left:620px;top:584px;width:48px;height:1px;background:#3e86c0"></div>
<div class="a" style="left:659px;top:530px;width:365px;height:30px;background:#fff;border:1px solid #cfcfcf"><div class="a" style="left:0;top:0;width:358px;height:28px;overflow:hidden">
  <div class="t mono" style="left:6px;top:8px;font-size:11.9px;color:#1818d8"><span style="color:#f01010">mregex</span><span style="color:#333">[</span>$configlet:policy_map_name<span style="color:#333">]:</span><span style="color:#a020c0">^(policy-map .+?</span></div>
</div></div>
<svg class="a" style="left:1029px;top:541.8px" width="10" height="9.4" viewBox="0 0 10 9.4"><rect x="0" y="0" width="10" height="1.2" fill="#555a60"/><rect x="0" y="3.6" width="10" height="1.2" fill="#8a8f94"/><rect x="0" y="7.2" width="10" height="1.2" fill="#555a60"/></svg>
<div class="a" style="left:668px;top:570px;width:355px;height:25px;background:#efeeee;border:1px solid #c6c6c6;border-bottom:none"></div>
<div class="a" style="left:669px;top:571px;width:35px;height:24px;background:#c8d4dc"></div>
<div class="t" style="left:669px;top:578px;width:35px;text-align:center;font-size:12px;color:#333">113</div>
<div class="a" style="left:711px;top:577px;width:164px;height:18px;background:#f4c4c8;border:1px solid #e8202a;border-bottom:none"></div>
<div class="t" style="left:713px;top:579px;font-size:12.1px;color:#2020d0">policy-map pm_voice_classes</div>
<div class="a" style="left:961px;top:571px;width:61px;height:24px;background:#fff"></div>
<svg class="a" style="left:969px;top:581px" width="7" height="11" viewBox="0 0 7 11"><path d="M1 1L5.5 5.5L1 10" fill="none" stroke="#333" stroke-width="1.3"/></svg>
<div class="t" style="left:982px;top:579px;font-size:11.75px;color:#333">1 Line</div>

<!-- output -->
<div class="a" style="left:562px;top:595px;width:514px;height:31px;background:#e9eaee;border-bottom:1px solid #cbcbcb;border-top:1px solid #d6d6d6"></div>
<svg class="a" style="left:814px;top:597px" width="14" height="8" viewBox="0 0 14 8"><path d="M3 5L7 1L11 5Z" fill="#333"/><path d="M1 7H13" stroke="#333" stroke-width="1.2"/></svg>
<div class="t" style="left:574px;top:603px;font-size:12.45px;font-weight:bold;color:#333">Output</div>
<div class="t blue" style="left:918px;top:603px;font-size:12.5px">+ Add More</div>
<svg class="a" style="left:989px;top:606px" width="11" height="8" viewBox="0 0 11 8"><path d="M1 1.5L5.5 6L10 1.5" fill="none" stroke="#2f78b7" stroke-width="1.3"/></svg>
<div class="a" style="left:1053px;top:611px;width:11px;height:1px;background:#333;box-shadow:0 0.5px 0 #777"></div>
<div class="t" style="left:574px;top:634px;font-size:12.2px;color:#2a7ab0">$class_map_name (configlet)</div>
<div class="t" style="left:747px;top:634px;font-size:12.2px;color:#2a7ab0">=</div>
<div class="t" style="left:765px;top:634px;font-size:12.2px;color:#2a7ab0">class-map match-all cm_class3 match access-group ...</div>
<div class="t" style="left:574px;top:664px;font-size:12.45px;color:#2a7ab0">$policy_map_name (configlet)</div>
<div class="t" style="left:754px;top:664px;font-size:12.2px;color:#2a7ab0">=</div>
<div class="t" style="left:771px;top:664px;font-size:11.95px;color:#2a7ab0">policy-map pm_voice_classes class cm_voice_class...</div>

<!-- resize grip -->
<svg class="a" style="left:1089px;top:789px" width="8" height="8" viewBox="0 0 8 8"><path d="M8 0L0 8H8Z" fill="#333"/><path d="M1 7L7 1M3 7L7 3M5 7L7 5" stroke="#eef0f4" stroke-width="0.7" stroke-dasharray="0.8 0.8"/></svg>
</body></html>
